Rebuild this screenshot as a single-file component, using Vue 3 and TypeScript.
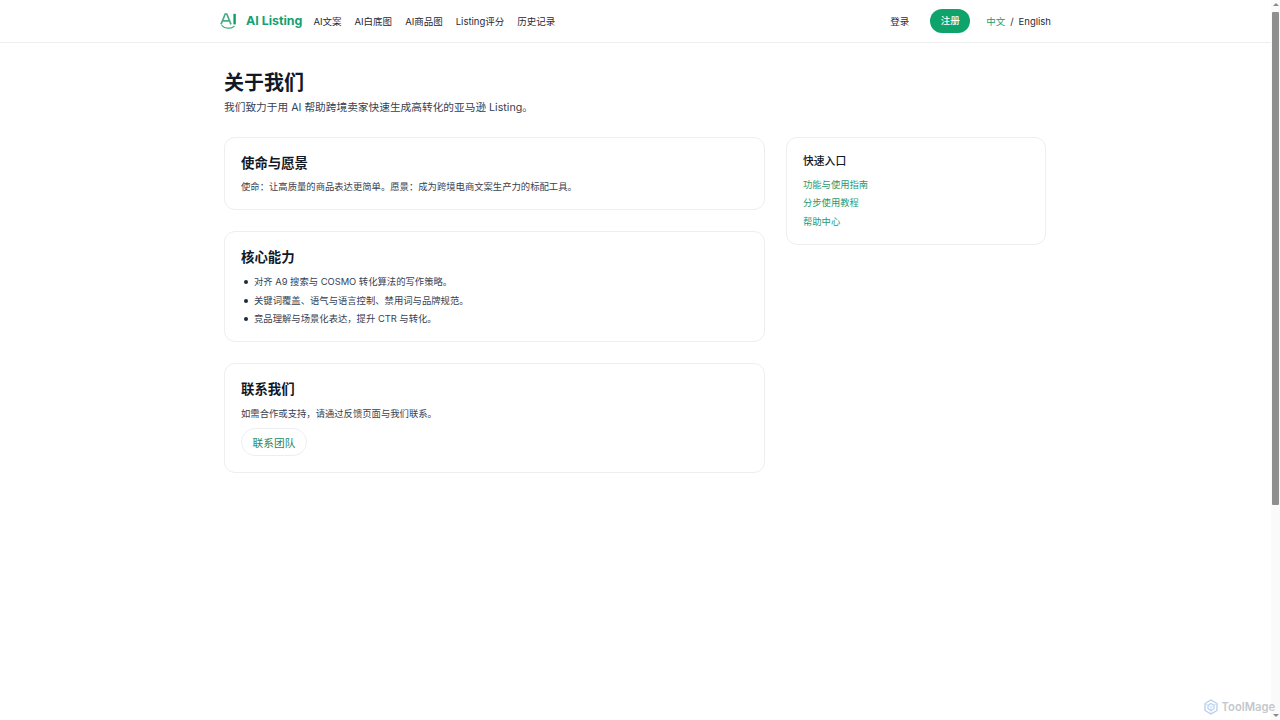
<script setup lang="ts">
const navItems = ["AI文案", "AI白底图", "AI商品图", "Listing评分", "历史记录"];
const abilities = [
  "对齐 A9 搜索与 COSMO 转化算法的写作策略。",
  "关键词覆盖、语气与语言控制、禁用词与品牌规范。",
  "竞品理解与场景化表达，提升 CTR 与转化。",
];
const quickLinks = ["功能与使用指南", "分步使用教程", "帮助中心"];
</script>

<template>
  <div class="page">
    <header class="topbar">
      <div class="topbar-inner">
        <a class="brand">
          <svg class="brand-mark" viewBox="0 0 18 16" width="18" height="16" aria-hidden="true">
            <path d="M1 11.4 5.2 1h1.6l4.2 10.4M2.8 7.8h6.4" fill="none" stroke="#45ad88" stroke-width="1.7" />
            <path d="M14.6 .8v10.6" fill="none" stroke="#0f9d68" stroke-width="2.4" />
            <path d="M2 12.6c2.8 3.2 8.6 3.4 12 .8" fill="none" stroke="#45ad88" stroke-width="1.3" stroke-linecap="round" />
          </svg>
          <span class="brand-name">AI Listing</span>
        </a>
        <nav class="nav">
          <a v-for="item in navItems" :key="item" class="nav-link">{{ item }}</a>
        </nav>
        <div class="actions">
          <a class="login">登录</a>
          <button class="register" type="button">注册</button>
          <div class="lang">
            <span class="lang-active">中文</span>
            <span>/</span>
            <span>English</span>
          </div>
        </div>
      </div>
    </header>

    <main class="content">
      <h1 class="title">关于我们</h1>
      <p class="subtitle">我们致力于用 AI 帮助跨境卖家快速生成高转化的亚马逊 Listing。</p>

      <div class="layout">
        <div class="main-col">
          <section class="card mission-card">
            <h2 class="card-title">使命与愿景</h2>
            <p class="card-text">使命：让高质量的商品表达更简单。愿景：成为跨境电商文案生产力的标配工具。</p>
          </section>
          <section class="card">
            <h2 class="card-title">核心能力</h2>
            <ul class="ability-list">
              <li v-for="item in abilities" :key="item">{{ item }}</li>
            </ul>
          </section>
          <section class="card contact-card">
            <h2 class="card-title">联系我们</h2>
            <p class="card-text">如需合作或支持，请通过反馈页面与我们联系。</p>
            <button class="contact" type="button">联系团队</button>
          </section>
        </div>

        <aside class="card side">
          <h3 class="side-title">快速入口</h3>
          <a v-for="link in quickLinks" :key="link" class="side-link">{{ link }}</a>
        </aside>
      </div>
    </main>

    <div class="watermark">
      <svg viewBox="0 0 16 16" width="16" height="16" aria-hidden="true">
        <path d="M8 1 14 4.5v7L8 15 2 11.5v-7z" fill="none" stroke="#b4cdf0" stroke-width="1.3" />
        <path d="M8 4.5 11 6.2v3.6L8 11.5 5 9.8V6.2z" fill="none" stroke="#b4cdf0" stroke-width="1.1" />
        <path d="M2 4.5 8 8l6-3.5M8 8v7" fill="none" stroke="#c8daf4" stroke-width=".8" />
      </svg>
      <span>ToolMage</span>
    </div>

    <div class="scrollbar" aria-hidden="true">
      <span class="arrow up"></span>
      <span class="thumb"></span>
      <span class="arrow down"></span>
    </div>
  </div>
</template>

<style scoped>
.page {
  position: relative;
  height: 720px;
  overflow: hidden;
  background: #fff;
  color: #111827;
  font-family: Inter, "Noto Sans CJK SC", sans-serif;
}

.topbar {
  height: 42px;
  border-bottom: 1px solid #eceef0;
}

.topbar-inner {
  display: flex;
  align-items: center;
  width: 831px;
  height: 100%;
  margin-left: 220px;
  line-height: 14px;
}

.brand {
  display: flex;
  align-items: center;
  gap: 8px;
}

.brand-name {
  color: #16a070;
  font-size: 12.4px;
  font-weight: 700;
  white-space: nowrap;
}

.nav {
  display: flex;
  gap: 13px;
  margin-left: 11px;
  padding-top: 1px;
}

.nav-link {
  color: #1f2937;
  font-size: 9.5px;
  white-space: nowrap;
}

.actions {
  display: flex;
  align-items: center;
  margin-left: auto;
  font-size: 9.5px;
}

.login {
  padding-top: 1px;
  color: #1f2937;
}

.register {
  width: 40px;
  height: 24px;
  margin-left: 21px;
  border: 0;
  border-radius: 12px;
  padding: 0;
  background: #0ea36b;
  color: #fff;
  font: inherit;
  font-weight: 500;
}

.lang {
  display: flex;
  gap: 5px;
  margin-left: 16px;
  padding-top: 1px;
  color: #1f2937;
}

.lang-active {
  color: #1f9a70;
}

.content {
  width: 822px;
  margin-left: 224px;
  padding-top: 26px;
}

.title {
  margin: 0;
  font-size: 20px;
  line-height: 28px;
  font-weight: 700;
}

.subtitle {
  margin: 1px 0 0;
  color: #374151;
  font-size: 10.7px;
  line-height: 20px;
}

.layout {
  display: grid;
  grid-template-columns: 541px 260px;
  gap: 21px;
  align-items: start;
  margin-top: 19px;
}

.main-col {
  display: flex;
  flex-direction: column;
  gap: 21px;
}

.card {
  border: 1px solid #eceef0;
  border-radius: 11px;
  padding: 16px 16px 14px;
  background: #fff;
}

.card-title {
  margin: 0;
  font-size: 13.4px;
  line-height: 18px;
  font-weight: 700;
}

.card-text {
  margin: 8px 0 0;
  color: #374151;
  font-size: 9.33px;
  line-height: 16px;
}

.mission-card {
  padding-bottom: 14.5px;
}

.mission-card .card-text {
  margin-top: 6.5px;
}

.ability-list {
  display: flex;
  flex-direction: column;
  gap: 2.5px;
  margin: 8px 0 0;
  padding: 0 0 0 3px;
  list-style: none;
  color: #374151;
  font-size: 9.33px;
  line-height: 16px;
}

.ability-list li {
  display: flex;
  align-items: center;
  gap: 6px;
}

.ability-list li::before {
  content: "";
  flex: none;
  width: 4px;
  height: 4px;
  border-radius: 50%;
  background: #1f2937;
}

.contact-card {
  padding-bottom: 16px;
}

.contact {
  display: block;
  width: 66px;
  height: 28px;
  margin-top: 6px;
  border: 1px solid #eceef0;
  border-radius: 14px;
  padding: 0;
  background: #fff;
  color: #1f8a63;
  font: inherit;
  font-size: 10.7px;
}

.side {
  padding-bottom: 15px;
}

.side-title {
  margin: 0;
  font-size: 10.8px;
  line-height: 15px;
  font-weight: 500;
}

.side-link {
  display: block;
  margin-top: 3px;
  color: #1f9a70;
  font-size: 9.3px;
  line-height: 15.5px;
}

.side-title + .side-link {
  margin-top: 7.5px;
}

.watermark {
  position: absolute;
  right: 5px;
  bottom: 5px;
  z-index: 1;
  display: flex;
  align-items: center;
  gap: 3px;
  color: #c4c7cc;
  font-size: 11.2px;
  font-weight: 600;
}

.scrollbar {
  position: absolute;
  top: 0;
  right: 0;
  bottom: 0;
  display: flex;
  flex-direction: column;
  align-items: center;
  width: 9px;
  background: #fafafa;
}

.thumb {
  width: 7px;
  height: 493px;
  margin-top: 6px;
  border-radius: 1px;
  background: #8f8f8f;
}

.arrow {
  width: 0;
  height: 0;
  border-left: 3px solid transparent;
  border-right: 3px solid transparent;
}

.arrow.up {
  margin-top: 3px;
  border-bottom: 3px solid #8a8a8a;
}

.arrow.down {
  margin-top: auto;
  margin-bottom: 3px;
  border-top: 3px solid #8a8a8a;
}
</style>

<style>
html,
body {
  margin: 0;
  overflow: hidden;
}
</style>
